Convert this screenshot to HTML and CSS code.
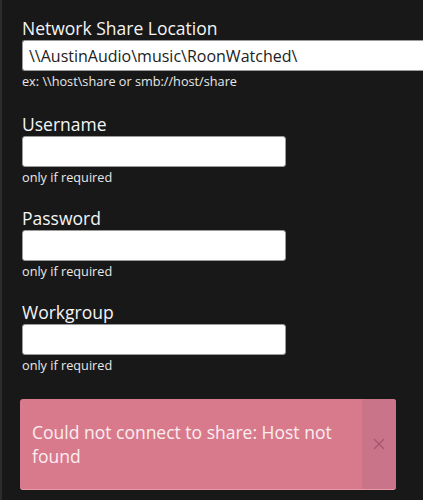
FILE: index.html
```html
<!DOCTYPE html>
<html lang="en">
<head>
  <meta charset="UTF-8" />
  <meta name="viewport" content="width=device-width, initial-scale=1.0"/>
  <title>Add Network Share</title>
  <link rel="stylesheet" href="styles.css">
</head>
<body>

  <div class="edge"></div>

  <form class="share-form">
    <div class="field first">
      <label>Network Share Location</label>
      <input type="text" class="wide" value="\\AustinAudio\music\RoonWatched\">
      <div class="hint">ex: \\host\share or smb://host/share</div>
    </div>

    <div class="field">
      <label>Username</label>
      <input type="text">
      <div class="hint">only if required</div>
    </div>

    <div class="field">
      <label>Password</label>
      <input type="password">
      <div class="hint">only if required</div>
    </div>

    <div class="field">
      <label>Workgroup</label>
      <input type="text">
      <div class="hint">only if required</div>
    </div>

    <!-- Error alert -->
    <div class="alert">
      <div class="alert-text">Could not connect to share: Host not found</div>
      <div class="alert-close">
        <svg width="12" height="12" viewBox="0 0 12 12">
          <path d="M1 1 L11 11 M11 1 L1 11" stroke="#a8566c" stroke-width="1.3" fill="none"/>
        </svg>
      </div>
    </div>
  </form>

</body>
</html>
```

FILE: styles.css
```css
* { margin: 0; padding: 0; box-sizing: border-box; }
body {
  font-family: 'Open Sans', 'Noto Sans', sans-serif;
  background: #181818;
  color: #f2f2f2;
  overflow: hidden;
  height: 500px;
  position: relative;
}

.edge {
  position: absolute;
  left: 0; top: 0;
  width: 2px; height: 100%;
  background: #2c2c2c;
}

.share-form {
  padding: 16px 0 0 22px;
}

.field {
  margin-bottom: 20px;
}

.field.first {
  margin-bottom: 22px;
}

.field label {
  display: block;
  font-size: 17.5px;
  line-height: 24px;
  color: #f4f4f4;
}

.field input {
  display: block;
  width: 264px;
  height: 31px;
  border: 1px solid #9a9a9a;
  border-radius: 3px;
  background: #fff;
  font-family: inherit;
  font-size: 16px;
  color: #222;
  padding: 0 6px;
  outline: none;
}

.field input.wide {
  width: 420px;
  border-right: none;
  border-radius: 3px 0 0 3px;
}

.hint {
  font-size: 12.7px;
  line-height: 17px;
  margin-top: 2px;
  color: #e8e8e8;
}

/* --- Alert --- */
.alert {
  display: flex;
  width: 376px;
  height: 91px;
  margin-left: -2px;
  margin-top: 25px;
  background: #d97a8c;
  border-radius: 3px;
  border-bottom: 1px solid #e89aa8;
  overflow: hidden;
}

.alert-text {
  flex: 1;
  padding: 0 12px;
  display: flex;
  align-items: center;
  font-size: 17.5px;
  line-height: 24px;
  color: #fbeef0;
}

.alert-close {
  width: 34px;
  background: #c97488;
  display: flex;
  align-items: center;
  justify-content: center;
}
```
